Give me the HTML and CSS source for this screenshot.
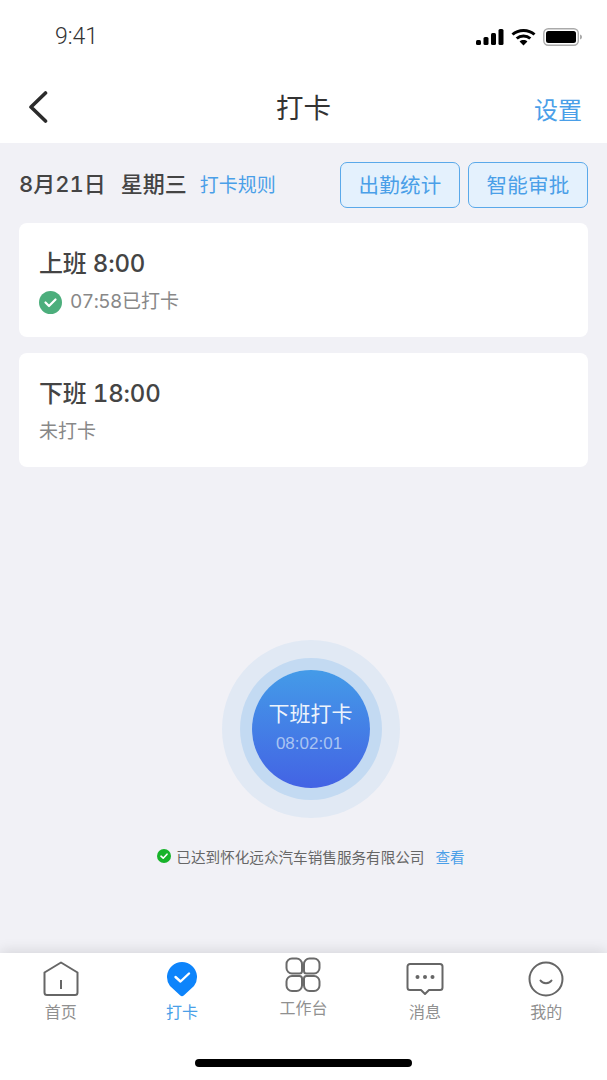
FILE: index.html
```html
<!DOCTYPE html>
<html lang="zh-CN">
<head>
    <meta charset="UTF-8">
    <title>打卡</title>
    <link rel="stylesheet" href="styles.css">
</head>
<body>
<div class="page">
    <div class="status">
        <span class="clock">9:41</span>
        <div class="status-icons">
            <svg width="28" height="18" viewBox="0 0 28 18"><rect x="0" y="12" width="5" height="5" rx="1.5"/><rect x="7.5" y="9" width="5" height="8" rx="1.5"/><rect x="15" y="5" width="5" height="12" rx="1.5"/><rect x="22.5" y="1" width="5" height="16" rx="1.5"/></svg>
            <svg width="25" height="18" viewBox="0 0 25 18"><path d="M1.5 6.5C7.5 1 17.5 1 23.5 6.5" fill="none" stroke="#000" stroke-width="3"/><path d="M5.7 10.5C9.5 7 15.5 7 19.3 10.5" fill="none" stroke="#000" stroke-width="3"/><path d="M12.5 17.5 8.6 13.5C10.8 11.6 14.2 11.6 16.4 13.5Z"/></svg>
            <svg width="40" height="18" viewBox="0 0 40 18"><rect x="0.8" y="0.8" width="34.5" height="16.4" rx="4.5" fill="none" stroke="#aaa" stroke-width="1.4"/><rect x="3" y="3" width="30" height="12" rx="2.5"/><path d="M37 6.5C38.5 7 39 8 39 9S38.5 11 37 11.5Z" fill="#aaa"/></svg>
        </div>
    </div>

    <div class="nav">
        <svg class="back" width="20" height="32" viewBox="0 0 20 32"><path d="M17.5 2 3 16 17.5 30" fill="none" stroke="#2b2b2b" stroke-width="3.6" stroke-linecap="round" stroke-linejoin="round"/></svg>
        <h1>打卡</h1>
        <a class="settings">设置</a>
    </div>

    <div class="main">
        <div class="date-row">
            <span class="date">8月21日</span>
            <span class="week">星期三</span>
            <a class="rule">打卡规则</a>
            <div class="actions">
                <a class="btn">出勤统计</a>
                <a class="btn">智能审批</a>
            </div>
        </div>

        <div class="card">
            <div class="card-title">上班 8:00</div>
            <div class="card-sub">
                <svg width="23" height="23" viewBox="0 0 23 23"><circle cx="11.5" cy="11.5" r="11.5" fill="#4cae7c"/><path d="M6.5 11.5 10 15 16.5 8.5" fill="none" stroke="#fff" stroke-width="2.2" stroke-linecap="round" stroke-linejoin="round"/></svg>
                <span class="checked-time">07:58</span>已打卡
            </div>
        </div>
        <div class="card">
            <div class="card-title">下班 18:00</div>
            <div class="card-sub">未打卡</div>
        </div>

        <div class="punch">
            <div class="punch-btn">
                <div class="punch-label">下班打卡</div>
                <div class="punch-time">08:02:01</div>
            </div>
            <div class="punch-note">
                <svg width="14" height="14" viewBox="0 0 14 14"><circle cx="7" cy="7" r="7" fill="#17b32a"/><path d="M4 7.2 6.2 9.2 10 5.2" fill="none" stroke="#fff" stroke-width="1.6" stroke-linecap="round" stroke-linejoin="round"/></svg>
                <span>已达到怀化远众汽车销售服务有限公司</span>
                <a>查看</a>
            </div>
        </div>
    </div>

    <div class="tabbar">
        <div class="tabs">
            <div class="tab">
                <svg width="36" height="36" viewBox="0 0 36 36"><path d="M18 1.500 34.500 11.500V31.500A2.500 2.500 0 0 1 32 34H4A2.500 2.500 0 0 1 1.500 31.500V11.500Z" fill="none" stroke="#666" stroke-width="2" stroke-linejoin="round"/><path d="M18 19V28" stroke="#666" stroke-width="2"/></svg>
                <span>首页</span>
            </div>
            <div class="tab active">
                <svg width="36" height="36" viewBox="0 0 36 36"><path d="M16 34.300 6 25A15 15 0 1 1 30 25L20 34.300Q18 36 16 34.300Z" fill="#0d84fb"/><path d="M11.500 16 16.500 20.500 25 12.500" fill="none" stroke="#fff" stroke-width="2.400" stroke-linecap="round" stroke-linejoin="round"/></svg>
                <span>打卡</span>
            </div>
            <div class="tab raised">
                <svg width="36" height="36" viewBox="0 0 36 36" fill="none" stroke="#6a6a6a" stroke-width="2"><path d="M7 1.500H11.500A5.500 5.500 0 0 1 17 7V14A2.500 2.500 0 0 1 14.500 16.500H7A5.500 5.500 0 0 1 1.500 11V7A5.500 5.500 0 0 1 7 1.500Z"/><path d="M24.500 1.500H29A5.500 5.500 0 0 1 34.500 7V11A5.500 5.500 0 0 1 29 16.500H21.500A2.500 2.500 0 0 1 19 14V7A5.500 5.500 0 0 1 24.500 1.500Z"/><path d="M7 19H14.500A2.500 2.500 0 0 1 17 21.500V28.500A5.500 5.500 0 0 1 11.500 34H7A5.500 5.500 0 0 1 1.500 28.500V24.500A5.500 5.500 0 0 1 7 19Z"/><path d="M21.500 19H29A5.500 5.500 0 0 1 34.500 24.500V28.500A5.500 5.500 0 0 1 29 34H24.500A5.500 5.500 0 0 1 19 28.500V21.500A2.500 2.500 0 0 1 21.500 19Z"/></svg>
                <span>工作台</span>
            </div>
            <div class="tab">
                <svg width="38" height="36" viewBox="0 0 38 36"><path d="M4 3H34A2.500 2.500 0 0 1 36.500 5.500V26.500A2.500 2.500 0 0 1 34 29H23L19 33 15 29H4A2.500 2.500 0 0 1 1.500 26.500V5.500A2.500 2.500 0 0 1 4 3Z" fill="none" stroke="#666" stroke-width="2" stroke-linejoin="round"/><circle cx="11.500" cy="16" r="2" fill="#666"/><circle cx="19" cy="16" r="2" fill="#666"/><circle cx="26.500" cy="16" r="2" fill="#666"/></svg>
                <span>消息</span>
            </div>
            <div class="tab">
                <svg width="36" height="36" viewBox="0 0 36 36"><circle cx="18" cy="18" r="16.500" fill="none" stroke="#666" stroke-width="2"/><path d="M12.500 19.500C14.500 23 21.500 23 23.500 19.500" fill="none" stroke="#666" stroke-width="2" stroke-linecap="round"/></svg>
                <span>我的</span>
            </div>
        </div>
        <div class="home-bar"></div>
    </div>
</div>
</body>
</html>
```

FILE: styles.css
```css
*{box-sizing:border-box;}
body{margin:0;font-family:"Inter","Noto Sans CJK SC",sans-serif;font-variant-numeric:tabular-nums;background:#fff;color:#333;}
a{color:#4a9fe8;text-decoration:none;}
.page{width:607px;height:1080px;display:flex;flex-direction:column;overflow:hidden;}

.status{height:72px;padding:0 24px 0 55px;display:flex;justify-content:space-between;align-items:center;}
.clock{font-family:"Roboto",sans-serif;font-weight:300;font-size:23px;color:#333;}
.status-icons{display:flex;align-items:center;gap:7px;margin-top:1px;}
.status-icons svg{display:block;}

.nav{height:71px;position:relative;display:flex;align-items:center;justify-content:center;}
.nav h1{margin:0;font-size:27.5px;font-weight:400;color:#333;line-height:40px;}
.back{position:absolute;left:28px;top:19px;}
.settings{position:absolute;right:25px;top:21px;font-size:24px;line-height:36px;}

.main{flex:1;background:#f1f1f6;padding:19px 19px 0;}
.date-row{display:flex;align-items:center;height:46px;margin-bottom:15px;}
.date,.week{font-size:22px;line-height:44px;margin-bottom:2px;font-weight:500;color:#444;}
.week{margin-left:15px;}
.rule{font-size:19px;line-height:44px;margin:1px 0 0 13px;}
.actions{margin-left:auto;display:flex;gap:8px;}
.btn{width:120px;height:46px;border:1px solid #5aa9ea;border-radius:7px;background:#e4f1fd;font-size:20.5px;letter-spacing:.25px;padding-bottom:2px;display:flex;align-items:center;justify-content:center;}

.card{height:114px;background:#fff;border-radius:8px;padding:25px 20px 0;margin-bottom:16px;}
.card-title{font-size:24px;line-height:32px;font-weight:500;color:#444;letter-spacing:-.2px;}
.card-sub{margin-top:10px;font-size:19px;line-height:24px;color:#888;display:flex;align-items:center;}
.card-sub svg{margin-right:8px;}
.checked-time{letter-spacing:-.5px;}

.punch{margin-top:203px;padding-left:15px;display:flex;flex-direction:column;align-items:center;}
.punch-btn{width:118px;height:118px;border-radius:50%;background:linear-gradient(180deg,#449be8,#4363e4);box-shadow:0 0 0 12px #c3daf2,0 0 0 30px #e1e9f4;text-align:center;padding-top:29px;}
.punch-label{font-size:21px;line-height:30px;color:#fff;opacity:.9;margin-right:1px;}
.punch-time{font-family:"Liberation Sans",sans-serif;font-size:17px;line-height:24px;margin:3px 4px 0 0;color:#a9c4f2;}
.punch-note{margin-top:58px;display:flex;align-items:center;height:20px;font-size:14.6px;color:#666;white-space:nowrap;}
.punch-note span{margin:0 11px 0 5px;}

.tabbar{height:127px;background:#fff;box-shadow:0 -3px 12px rgba(0,0,0,.1);position:relative;}
.tabs{display:grid;grid-template-columns:repeat(5,1fr);padding-top:8px;}
.tab{display:flex;flex-direction:column;align-items:center;font-size:16px;line-height:20px;color:#909090;}
.tab span{margin-top:5px;}
.tab svg{display:block;}
.tab.raised{margin-top:-4px;}
.tab.active{color:#4a9fe8;}
.home-bar{position:absolute;left:195px;bottom:13px;width:217px;height:8px;border-radius:4px;background:#000;}
```
